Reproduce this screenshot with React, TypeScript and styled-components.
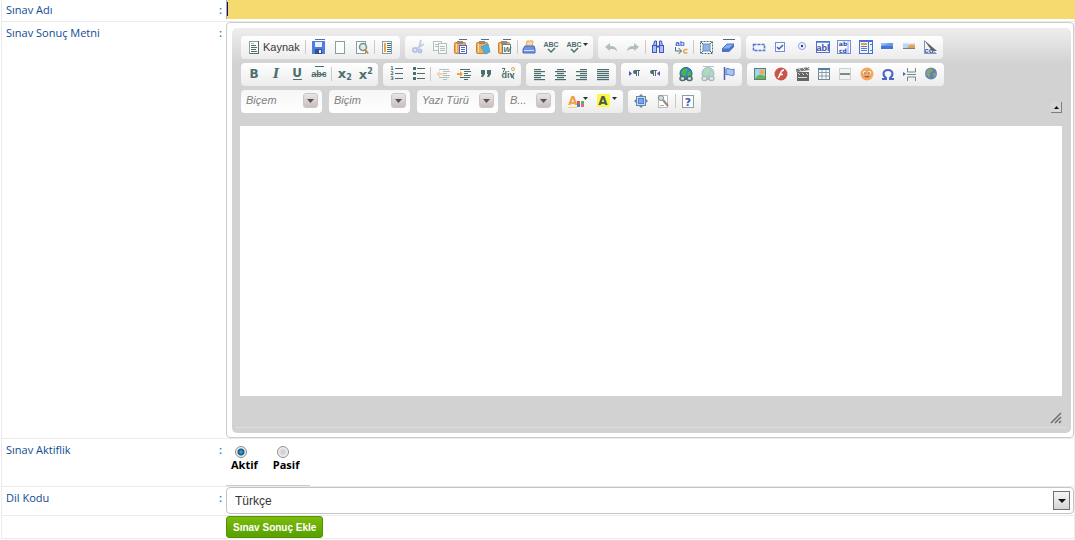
import React from "react";
import styled, { createGlobalStyle, css } from "styled-components";

const INK = "#4d6e6e";
const BLUE = "#4a66d0";
const UI_FONT = `"Liberation Sans", Arial, sans-serif`;
const LABEL_FONT = `"Open Sans", "Noto Sans", sans-serif`;

const GlobalStyle = createGlobalStyle`
  *, *::before, *::after { box-sizing: border-box; }
  body { margin: 0; background: #fff; font-family: ${UI_FONT}; }
`;

/* ---------- form rows ---------- */

const Form = styled.form`
  margin-left: 1px;
`;

const Row = styled.div`
  display: grid;
  grid-template-columns: 224px minmax(0, 1fr);
  border: 1px solid #ebebeb;
  border-top: 0;
`;

const caption = css`
  display: flex;
  justify-content: space-between;
  padding: 3px 4px 0;
  font: 11px/16px ${LABEL_FONT};
  color: #0d4b94;
`;
const Caption = styled.label<{ $tight?: boolean }>`
  ${caption}
  ${(p) => p.$tight && "padding-top: 2px;"}
`;
const GroupCaption = styled.span`${caption}`;
const Colon = styled.span`
  font-weight: 600;
  color: #1a75a8;
`;

const NameInput = styled.input`
  width: calc(100% + 1px);
  height: 19px;
  margin-bottom: 2px;
  padding: 0 4px;
  border: 0;
  border-left: 1px solid #a9a9a9;
  border-radius: 0;
  outline: 0;
  background: linear-gradient(#10108a, #10108a) 0 2px / 1px 14px no-repeat #f5da70;
  font: 12px ${UI_FONT};
`;

/* ---------- editor ---------- */

const Frame = styled.div`
  padding: 5px 2px 4px 5px;
  border: 1px solid #ccc;
  border-radius: 4px;
`;

const Panel = styled.div`
  padding: 8px 9px 5px 8px;
  border-radius: 5px;
  background: linear-gradient(#eeeeee, #d2d2d2 36px);
`;

const Toolbar = styled.div`
  display: flex;
  flex-direction: column;
  gap: 4px;
  padding-left: 1px;
  margin-bottom: 13px;
`;

const ToolRow = styled.div`
  display: flex;
  gap: 5px;
`;

const Group = styled.div<{ $width: number }>`
  display: flex;
  align-items: center;
  flex: 0 0 ${(p) => p.$width}px;
  height: 23px;
  padding: 0 2px 1px;
  border-radius: 4px;
  background: linear-gradient(#ffffff, #ececec);
`;

const ToolButton = styled.button<{ $wide?: boolean; $dim?: boolean }>`
  display: flex;
  align-items: center;
  justify-content: center;
  flex: ${(p) => (p.$wide ? "0 0 29px" : "1 1 0")};
  min-width: 0;
  height: 20px;
  padding: 0;
  border: 0;
  background: none;
  color: #3a3a3a;
  opacity: ${(p) => (p.$dim ? 0.4 : 1)};
`;

const SourceButton = styled(ToolButton)`
  flex: 0 0 61px;
  justify-content: flex-start;
  gap: 1px;
  padding-left: 3px;
  font: 11px ${UI_FONT};
`;

const Divider = styled.span`
  flex: 0 0 1px;
  height: 14px;
  margin: 0 1px;
  background: #c9c9c9;
`;

const Icon = styled.svg`
  display: block;
  flex: none;
  overflow: visible;
`;

const Combos = styled.div`
  display: flex;
  gap: 7px;
  margin-right: 2px;
`;

const ComboBox = styled.div<{ $width: number }>`
  position: relative;
  flex: 0 0 ${(p) => p.$width}px;
  height: 23px;
`;

const ComboSelect = styled.select`
  appearance: none;
  display: block;
  width: 100%;
  height: 100%;
  padding: 0 22px 3px 5px;
  border: 0;
  border-radius: 4px;
  background: linear-gradient(#f6f6f6, #ffffff);
  font: italic 11px ${UI_FONT};
  color: #808080;
`;

const ComboArrow = styled.span`
  position: absolute;
  top: 3px;
  right: 4px;
  display: flex;
  align-items: center;
  justify-content: center;
  width: 15px;
  height: 15px;
  border: 1px solid #cdc5c5;
  border-radius: 3px;
  background: linear-gradient(#eae6e6, #c8bebe);
  pointer-events: none;
`;

const CollapseButton = styled.button`
  display: flex;
  align-items: center;
  justify-content: center;
  align-self: flex-end;
  width: 11px;
  height: 11px;
  margin-left: auto;
  padding: 0;
  border: 0 solid #7c7c7c;
  border-width: 0 1px 1px 0;
  background: #d6d6d6;
`;

const EditArea = styled.textarea`
  display: block;
  width: 100%;
  height: 270px;
  padding: 8px;
  border: 0;
  outline: 0;
  resize: none;
  background: #fff;
  font: 12px ${UI_FONT};
`;

const PanelFooter = styled.div`
  display: flex;
  justify-content: flex-end;
  height: 32px;
  margin: 0 -4px;
  padding: 16px 4px 0;
  border-bottom: 1px solid #e0e0e0;
`;

/* ---------- status, language, submit ---------- */

const RadioGroup = styled.div`
  display: flex;
  gap: 15px;
  width: 84px;
  height: 47px;
  padding: 7px 5px 0;
  border-bottom: 1px solid #ccc;
`;

const RadioLabel = styled.label`
  display: flex;
  flex-direction: column;
  font: bold 11px/14px ${LABEL_FONT};
  color: #000;
`;

const Radio = styled.input`
  appearance: none;
  width: 12px;
  height: 12px;
  margin: 0 0 0 4px;
  border: 1px solid #8b8f94;
  border-radius: 50%;
  background: radial-gradient(circle, #d4d4d4 0 2px, #f6f6f6 5px);
  &:checked {
    background: radial-gradient(circle at 50% 50%, #4fb0dc 0, #14527c 3px, #e9eef2 4px);
  }
`;

const LanguageBox = styled.div`
  position: relative;
  height: 28px;
`;

const LanguageSelect = styled.select`
  appearance: none;
  display: block;
  width: 100%;
  height: 27px;
  padding: 0 30px 0 8px;
  border: 1px solid #c4c4c4;
  border-radius: 4px;
  background: #fff;
  font: 12px ${UI_FONT};
  color: #333;
`;

const LanguageArrow = styled.span`
  position: absolute;
  top: 4px;
  right: 4px;
  display: flex;
  align-items: center;
  justify-content: center;
  width: 17px;
  height: 19px;
  border: 1px solid #6f6f6f;
  background: linear-gradient(#f6f6f6, #d5d5d5);
  pointer-events: none;
`;

const SubmitButton = styled.button`
  justify-self: start;
  height: 22px;
  padding: 0 6px;
  border: 1px solid #4f9400;
  border-radius: 3px;
  background: linear-gradient(#7dbb0c, #57a000);
  font: bold 10px ${UI_FONT};
  color: #fff;
`;

/* ---------- icon drawings, each on a 16 by 16 grid ---------- */

const Lines = ({ rows, color = INK }: { rows: [number, number, number][]; color?: string }) => (
  <g fill={color} shapeRendering="crispEdges">
    {rows.map(([x, y, w], i) => (
      <rect key={i} x={x} y={y} width={w} height="1" />
    ))}
  </g>
);

const Glyph = ({ x = 8, y = 12, size = 12, color = INK, italic = false, font = "DejaVu Sans", children }: {
  x?: number; y?: number; size?: number; color?: string; italic?: boolean; font?: string; children: string;
}) => (
  <text x={x} y={y} fontSize={size} fontWeight="bold" fontStyle={italic ? "italic" : "normal"} fontFamily={`"${font}", sans-serif`} textAnchor="middle" fill={color}>
    {children}
  </text>
);

const Page = ({ x = 3.5 }: { x?: number }) => (
  <rect x={x} y="2.5" width="9" height="12" fill="#fbfdfd" stroke="#8a9f9f" />
);

const Clipboard = () => (
  <g>
    <rect x="1.5" y="3.5" width="11" height="11" rx="1" fill="#f3ab55" stroke="#c58338" />
    <path d="M3.500 5v8" stroke="#fbd9a4" />
    <rect x="4" y="2" width="6" height="3" fill="#9a8a7c" />
    <rect x="6" y="0" width="8" height="1" fill="#5a6a94" />
  </g>
);

const Caret = ({ x = 16, y = 6 }: { x?: number; y?: number }) => (
  <path d={`M${x} ${y}h5l-2.500 3z`} fill="#303030" />
);

const Globe = () => (
  <g>
    <circle cx="8" cy="7.500" r="6" fill="#2f86d4" stroke="#235a8c" />
    <path d="M4 4l4-2 2 2-2 3-1 4-4-3zM10 6l3-1v4l-2 2-2-3z" fill="#49b648" />
  </g>
);

const Chain = () => (
  <g fill="#d4dddd" stroke={INK} strokeWidth="1.500">
    <rect x="2" y="10.500" width="5" height="4" rx="2" />
    <rect x="9" y="10.500" width="5" height="4" rx="2" />
    <path d="M6 12.500h4" />
  </g>
);

const Align = ({ xs }: { xs: [number, number][] }) => (
  <g fill={INK}>
    {xs.map(([x, w], i) => <rect key={i} x={x} y={3 + i * 2} width={w} height="1.200" />)}
  </g>
);

const Pilcrow = ({ x }: { x: number }) => (
  <path d={`M${x + 3} 4v6h1v-5h1v5h1v-5h1v-1h-5a2 2 0 0 0 0 4h1z`} fill={INK} />
);

const Indent = ({ out }: { out?: boolean }) => (
  <g>
    <Lines rows={[[4, 3, 10], [8, 5, 7], [8, 7, 4], [8, 9, 7], [4, 11, 10], [8, 13, 4]]} />
    <path d={out ? "M1 8l4-3v2h3v2h-3v2z" : "M7 8l-3-3v2h-3v2h3v2z"} fill="#f4a13c" />
  </g>
);

const SpellCheck = ({ x = 8 }: { x?: number }) => (
  <g>
    <Glyph x={x} y={8} size={7} font="Liberation Sans">ABC</Glyph>
    <path d={`M${x - 3} 10l3 3 4-4`} fill="none" stroke={INK} strokeWidth="1.500" />
  </g>
);

const icons: Record<string, React.ReactNode> = {
  source: <g><Page /><path d="M12.500 2v12.500M4 14.500h9" stroke={INK} /><Lines rows={[[5, 4, 3], [5, 6, 5], [5, 8, 6], [5, 10, 5], [5, 12, 6]]} /><path d="M5 4.500h3" stroke="#e8b05a" /></g>,
  save: (
    <g shapeRendering="crispEdges">
      <rect x="2" y="2" width="13" height="13" fill="#4c7ce4" />
      <rect x="5" y="0" width="10" height="1" fill="#5a6aa4" />
      <rect x="5" y="3" width="7" height="5" fill="#e8f0ff" />
      <rect x="5" y="10" width="7" height="5" fill="#34508e" />
      <rect x="9" y="11" width="2" height="3" fill="#f4f4d0" />
    </g>
  ),
  newPage: <Page />,
  preview: (
    <g>
      <Page x={2.5} />
      <circle cx="9" cy="8" r="3.500" fill="#dfeaea" stroke="#7a908f" strokeWidth="1.500" />
      <path d="M11 10.500l3 4" stroke="#c98a3c" strokeWidth="2" />
    </g>
  ),
  templates: <g><Page /><Lines rows={[[8, 4, 4], [8, 6, 4], [8, 8, 4], [8, 10, 4], [8, 12, 4]]} /><path d="M6 4v9" stroke="#e8a24a" strokeWidth="2" /></g>,
  cut: (
    <g stroke="#5f7fd0" strokeWidth="2" fill="none">
      <path d="M11 1l-2 8M14 5l-8 5" stroke="#7b93b8" />
      <circle cx="5" cy="11" r="2" /><circle cx="10" cy="12" r="1.500" />
    </g>
  ),
  copy: (
    <g fill="#fff" stroke={INK}>
      <rect x="1.500" y="2.500" width="8" height="9" />
      <rect x="6.500" y="4.500" width="8" height="10" />
      <path d="M8 7.500h5M8 9.500h5M8 11.500h5M3 5.500h3M3 7.500h3" />
    </g>
  ),
  paste: <g><Clipboard /><rect x="6.500" y="6.500" width="7" height="8" fill="#fff" stroke={BLUE} /><Lines color={BLUE} rows={[[8, 8, 4], [8, 10, 4], [8, 12, 4]]} /></g>,
  pasteText: <g><Clipboard /><path d="M6 8l7-3 2 8-5 2z" fill="#4bb0dc" stroke="#5c9fc4" /></g>,
  pasteWord: <g><Clipboard /><rect x="5.500" y="5.500" width="8" height="9" fill="#fff" stroke="#6d8585" /><Glyph x={10} y={13} size={8} font="Liberation Sans" italic>W</Glyph></g>,
  print: (
    <g>
      <path d="M5 8l1-6h6l-1 6z" fill="#f8d6a0" stroke="#e0a860" />
      <path d="M2 10l2-3h9l1 3v4h-12z" fill="#6f93e4" stroke="#4c68ac" />
      <path d="M3 11.500h10" stroke="#cfe0ff" />
    </g>
  ),
  spell: <SpellCheck />,
  spellMenu: <g><SpellCheck x={5} /><Caret x={14} y={4} /></g>,
  undo: <path d="M2 8l5-4v3c4 0 7 1 7 6-1-3-4-3-7-3v2z" fill={INK} />,
  redo: <path d="M14 8l-5-4v3c-4 0-7 1-7 6 1-3 4-3 7-3v2z" fill={INK} />,
  find: (
    <g fill="#a9c0ff" stroke="#4058b4">
      <path d="M3.500 7l1-5h2v5M12.500 7l-1-5h-2v5" /><rect x="2.500" y="6.500" width="4" height="7" /><rect x="9.500" y="6.500" width="4" height="7" /><path d="M6 7.500h4" strokeWidth="2" />
    </g>
  ),
  replace: (
    <g>
      <Glyph x={7} y={7} size={8} color={BLUE} font="Liberation Sans">ab</Glyph>
      <path d="M14.500 10.500h-2a1.500 1.500 0 0 0 0 3.500h2" fill="none" stroke="#eba54c" strokeWidth="1.500" />
      <path d="M2.500 8v4h6m-3-3l3 3-3 3" fill="none" stroke={INK} />
    </g>
  ),
  selectAll: (
    <g>
      <rect x="2.500" y="2.500" width="12" height="12" fill="#fff" stroke={INK} strokeDasharray="2 1" />
      <rect x="5" y="5" width="7" height="7" fill="#8fb4e8" stroke="#6d8cb4" />
      <path d="M3 3l2 2M14 3l-2 2M3 14l2-2M14 14l-2-2" stroke={INK} />
    </g>
  ),
  erase: <g><path d="M3 .500h12" stroke={INK} /><path d="M2 10l5-5h7l-5 5z" fill="#80abf0" stroke="#4c72c4" /><path d="M2 10h7l5-5v3l-5 5h-7z" fill="#4c72c4" /></g>,
  form: <rect x="2.500" y="5.500" width="11" height="6" fill="none" stroke="#4c74d8" strokeWidth="1.500" strokeDasharray="3 1" />,
  checkbox: <g><rect x="3.500" y="3.500" width="9" height="9" fill="#f6f9ff" stroke="#6f8fe0" /><path d="M5 8l2 2 4-4" fill="none" stroke="#4c5c98" strokeWidth="1.500" /></g>,
  radio: <g><circle cx="8" cy="7" r="3.500" fill="#f4f8ff" stroke="#88a3de" /><circle cx="8" cy="7" r="1.200" fill="#203c94" /></g>,
  textField: <g><rect x="1.500" y="2.500" width="13" height="11" fill="#f6f9ff" stroke="#4c74d8" /><path d="M1 3h14" stroke="#4c74d8" strokeWidth="1.500" /><Glyph x={8} y={12} size={9} font="Liberation Sans" color="#3c509c">abl</Glyph></g>,
  textArea: <g><rect x="1.500" y="1.500" width="13" height="13" fill="#f6f9ff" stroke="#6e8fdc" /><path d="M12 2v12" stroke="#8eaae8" /><Glyph x={7} y={7} size={6} color="#3c509c">ab</Glyph><Glyph x={7} y={14} size={6} color="#3c509c">cd</Glyph></g>,
  selectField: <g><rect x="1.500" y="1.500" width="13" height="13" fill="#eef3ff" stroke="#4870d0" /><path d="M2 2.500h12M10.500 3v11" stroke="#4870d0" /><Lines color="#e49a4c" rows={[[3, 4, 6], [3, 5, 6]]} /><Lines color="#5b77b8" rows={[[3, 7, 6], [3, 9, 6], [3, 11, 6], [12, 5, 2], [12, 11, 2]]} /></g>,
  button: <g><path d="M2 4h12v6h-12z" fill="#6a98e8" /><path d="M2 7h12v3h-12z" fill="#4474d4" /><path d="M2 7l8-3h-8z" fill="#98bdf6" /></g>,
  imageButton: <g><path d="M2 4.500h12v5h-12z" fill="#b9d5f8" /><path d="M6 9.500c1-3 4-5 8-3v3z" fill="#e8a050" /><path d="M2 9.500h12" stroke="#8b7a6a" /></g>,
  hidden: <g><Glyph x={8} y={14} size={8} font="Liberation Sans" color="#4258b0">cd.</Glyph><path d="M2 1l13 11h-5z" fill="#55656a" /><path d="M2.500 1.500v13h12" fill="none" stroke="#8195c0" /></g>,
  bold: <Glyph size={12}>B</Glyph>,
  italic: <Glyph size={13} italic font="DejaVu Serif">I</Glyph>,
  underline: <g><Glyph y={11} size={12}>U</Glyph><path d="M4 13.500h9" stroke={INK} /></g>,
  strike: <g><path d="M4 .500h9" stroke={INK} /><Glyph y={11} size={9} font="Liberation Sans">abc</Glyph><path d="M1 8.500h14" stroke={INK} /></g>,
  sub: <g><Glyph x={6} y={12} size={13}>x</Glyph><Glyph x={13} y={14} size={8}>2</Glyph></g>,
  sup: <g><Glyph x={6} y={13} size={13}>x</Glyph><Glyph x={13} y={8} size={8}>2</Glyph></g>,
  ordered: <g><Lines rows={[[7, 2, 8], [7, 7, 8], [7, 12, 8]]} /><Glyph x={4} y={4} size={5}>1</Glyph><Glyph x={4} y={9} size={5}>2</Glyph><Glyph x={4} y={14} size={5}>3</Glyph></g>,
  bullets: <g><Lines rows={[[7, 2, 8], [7, 7, 8], [7, 12, 8]]} /><path d="M3 1h3v3h-3zM3 6h3v3h-3zM3 11h3v3h-3z" fill={INK} /></g>,
  outdent: <Indent out />,
  indent: <Indent />,
  quote: <path d="M3 4h4v4l-2 3h-2l1-3h-1zM9 4h4v4l-2 3h-2l1-3h-1z" fill={INK} />,
  div: <g><Glyph x={8} y={12} size={9} font="Liberation Sans">div</Glyph><path d="M2 2.500h3l-2 4M11 8l3 5" fill="none" stroke={INK} /><circle cx="13" cy="3" r="1.500" fill="#fff" stroke="#eda044" /></g>,
  left: <Align xs={[[3, 7], [3, 11], [3, 7], [3, 11], [3, 7], [3, 11]]} />,
  center: <Align xs={[[5, 7], [3, 11], [5, 7], [3, 11], [5, 7], [3, 11]]} />,
  right: <Align xs={[[6, 7], [2, 11], [6, 7], [2, 11], [6, 7], [2, 11]]} />,
  justify: <Align xs={[[2, 12], [2, 12], [2, 12], [2, 12], [2, 12], [2, 12]]} />,
  ltr: <g><path d="M3 5l3 2.500-3 2.500z" fill="#5050c4" /><Pilcrow x={7} /></g>,
  rtl: <g><path d="M13 5l-3 2.500 3 2.500z" fill="#5050c4" /><Pilcrow x={3} /></g>,
  link: <g><Globe /><Chain /></g>,
  unlink: <g><Globe /><Chain /><path d="M3 .500h11" stroke={INK} /></g>,
  anchor: <g><path d="M3.500 1v13" stroke="#4c62a8" strokeWidth="1.500" /><path d="M5 3c3-2 4 2 8 0v6c-4 2-5-2-8 0z" fill="#abc3f6" stroke="#5a76c4" /></g>,
  image: <g><rect x="2.500" y="2.500" width="11" height="11" fill="#9fd4f4" stroke="#5e8070" /><path d="M3 13c2-5 6-5 10-3v3z" fill="#68b558" /><circle cx="10" cy="6" r="2.500" fill="#f0a84a" /></g>,
  flash: <g><circle cx="8" cy="8" r="6.500" fill="#cc5348" /><path d="M11 4c-4 0-3 5-6 8M6 8.500h4" fill="none" stroke="#fff" strokeWidth="1.500" /></g>,
  movie: <g><rect x="2" y="6" width="12" height="9" fill="#666" /><path d="M1 3l13-2 .500 3-13 2z" fill="#777" /><path d="M4 3l2 2M8 2l2 2M12 1l2 2M3 7l2 2M7 7l2 2M11 7l2 2M3 11.500h9" stroke="#dadada" /></g>,
  table: <g><rect x="2.500" y="2.500" width="11" height="11" fill="#fff" stroke="#6f8692" /><path d="M2 3h12" stroke="#50809c" strokeWidth="2" /><path d="M2 6.500h12M2 10h12M6 4v10M10 4v10" stroke="#8a9ca6" /></g>,
  rule: <g><rect x="2.500" y="2.500" width="11" height="11" fill="#f3f3f3" stroke="#cfcfcf" /><path d="M3 8h10" stroke={INK} strokeWidth="1.500" /></g>,
  smiley: <g><circle cx="8" cy="8" r="6.500" fill="#f4a85c" /><circle cx="5.500" cy="6.500" r="1.500" fill="#fff" /><circle cx="10.500" cy="6.500" r="1.500" fill="#fff" /><circle cx="6" cy="7" r=".8" fill="#333" /><circle cx="10" cy="7" r=".8" fill="#333" /><path d="M5 10c2 2 4 2 6 0z" fill="#b4502c" /></g>,
  omega: <path d="M2 13h4v-1c-4-3-3-8 2-8s6 5 2 8v1h4" fill="none" stroke="#4c66c4" strokeWidth="2" />,
  pageBreak: <g fill="none" stroke="#708a89"><path d="M5.500 2v4h8v-4M5.500 15v-4h8v4M5 8.500h9" /><path d="M1 6l3 2-3 2z" fill={BLUE} stroke="none" /></g>,
  iframe: <g><circle cx="8" cy="7.500" r="6" fill="#6482b0" /><path d="M4 4l4-2 2 3-3 2v5l-4-4zM10 7l4 0-3 5z" fill="#88a470" /></g>,
  textColor: <g><Glyph x={3} y={12} size={12} color="#f0a048">A</Glyph><path d="M7 8h3v3h-3z" fill="#e25b4a" /><path d="M11 8h3v3h-3z" fill="#58b656" /><path d="M7 11h3v3h-3z" fill="#4c78dc" /><path d="M11 11h3v3h-3z" fill="#e06a7c" /><path d="M-2 14.500h9" stroke="#f2d860" /><Caret x={13} y={4} /></g>,
  fillColor: <g><rect x="-2" y="1" width="13" height="13" fill="#fdf848" /><Glyph x={4} y={12} size={12} color="#4c5c44">A</Glyph><Caret x={13} y={4} /></g>,
  maximize: <g><path d="M8 1l2 2h3v3l2 2-2 2v3h-3l-2 2-2-2h-3v-3l-2-2 2-2v-3h3z" fill="#6a8898" /><rect x="4" y="4" width="8" height="8" fill="#c4dcff" /><rect x="5.500" y="5.500" width="5" height="5" fill="#78a6ee" stroke="#5080d4" /></g>,
  blocks: <g><rect x="3.500" y="2.500" width="9" height="12" fill="#fff" stroke="#b4bcbc" /><circle cx="6" cy="5" r="2.500" fill="#d5dede" stroke="#7b908f" /><path d="M8 7l5 6" stroke="#9c8772" strokeWidth="2" /><path d="M5 12.500h4" stroke="#98a8a8" /></g>,
  about: <g><rect x="2.500" y="2.500" width="11" height="12" fill="#fff" stroke="#8ba0a0" /><Glyph x={8} y={13} size={11} color="#4a54b8">?</Glyph></g>,
};

type Tool = { icon: string; title: string; dim?: boolean; wide?: boolean } | "|";
const t = (icon: string, title: string, extra: { dim?: boolean; wide?: boolean } = {}): Tool => ({ icon, title, ...extra });

type ToolGroup = { width: number; source?: boolean; tools: Tool[] };

const firstRow: ToolGroup[] = [
  { width: 159, source: true, tools: ["|", t("save", "Kaydet"), t("newPage", "Yeni Sayfa"), t("preview", "Ön İzleme"), "|", t("templates", "Şablonlar")] },
  { width: 188, tools: [t("cut", "Kes", { dim: true }), t("copy", "Kopyala", { dim: true }), t("paste", "Yapıştır"), t("pasteText", "Düz Metin Yapıştır"), t("pasteWord", "Word'den Yapıştır"), "|", t("print", "Yazdır"), t("spell", "Yazım Denetimi"), t("spellMenu", "Yazım Seçenekleri", { wide: true })] },
  { width: 143, tools: [t("undo", "Geri Al", { dim: true }), t("redo", "Tekrarla", { dim: true }), "|", t("find", "Bul"), t("replace", "Değiştir"), "|", t("selectAll", "Tümünü Seç"), t("erase", "Biçimi Kaldır")] },
  { width: 197, tools: [t("form", "Form"), t("checkbox", "Onay Kutusu"), t("radio", "Seçenek Düğmesi"), t("textField", "Metin Girişi"), t("textArea", "Çok Satırlı Metin"), t("selectField", "Seçim Menüsü"), t("button", "Düğme"), t("imageButton", "Resimli Düğme"), t("hidden", "Gizli Veri")] },
];

const secondRow: ToolGroup[] = [
  { width: 137, tools: [t("bold", "Kalın"), t("italic", "İtalik"), t("underline", "Altı Çizgili"), t("strike", "Üstü Çizgili"), "|", t("sub", "Alt Simge"), t("sup", "Üst Simge")] },
  { width: 138, tools: [t("ordered", "Numaralı Liste"), t("bullets", "Simgeli Liste"), "|", t("outdent", "Girintiyi Azalt", { dim: true }), t("indent", "Girintiyi Artır"), t("quote", "Alıntı"), t("div", "Div Kutusu")] },
  { width: 90, tools: [t("left", "Sola Dayalı"), t("center", "Ortalanmış"), t("right", "Sağa Dayalı"), t("justify", "İki Kenara Yaslanmış")] },
  { width: 47, tools: [t("ltr", "Soldan Sağa"), t("rtl", "Sağdan Sola")] },
  { width: 69, tools: [t("link", "Bağlantı"), t("unlink", "Bağlantıyı Kaldır", { dim: true }), t("anchor", "Çapa")] },
  { width: 197, tools: [t("image", "Resim"), t("flash", "Flash"), t("movie", "Video"), t("table", "Tablo"), t("rule", "Yatay Çizgi"), t("smiley", "İfade"), t("omega", "Özel Karakter"), t("pageBreak", "Sayfa Sonu"), t("iframe", "IFrame")] },
];

const thirdRow: ToolGroup[] = [
  { width: 61, tools: [t("textColor", "Yazı Rengi"), t("fillColor", "Arka Renk")] },
  { width: 73, tools: [t("maximize", "Büyüt"), t("blocks", "Blokları Göster"), "|", t("about", "Hakkında")] },
];

const combos = [
  { label: "Biçem", width: 81 },
  { label: "Biçim", width: 81 },
  { label: "Yazı Türü", width: 81 },
  { label: "B...", width: 50 },
];

const Draw = ({ name }: { name: string }) => (
  <Icon width="16" height="16" viewBox="0 0 16 16" aria-hidden="true">{icons[name]}</Icon>
);

const ToolGroups = ({ groups }: { groups: ToolGroup[] }) => (
  <>
    {groups.map((group, i) => (
      <Group key={i} $width={group.width}>
        {group.source && (
          <SourceButton type="button"><Draw name="source" />Kaynak</SourceButton>
        )}
        {group.tools.map((tool, j) =>
          tool === "|" ? (
            <Divider key={j} />
          ) : (
            <ToolButton key={j} type="button" aria-label={tool.title} $dim={tool.dim} $wide={tool.wide}>
              <Draw name={tool.icon} />
            </ToolButton>
          )
        )}
      </Group>
    ))}
  </>
);

const Triangle = ({ width, height, up, color = "#111" }: { width: number; height: number; up?: boolean; color?: string }) => (
  <Icon width={width} height={height} viewBox="0 0 10 10" preserveAspectRatio="none" aria-hidden="true">
    <path d={up ? "M0 10h10L5 0z" : "M0 0h10L5 10z"} fill={color} />
  </Icon>
);

export default function App() {
  return (
    <>
      <GlobalStyle />
      <Form onSubmit={(e) => e.preventDefault()}>
        <Row>
          <Caption htmlFor="exam-name" $tight>Sınav Adı<Colon>:</Colon></Caption>
          <NameInput id="exam-name" type="text" />
        </Row>
        <Row>
          <Caption htmlFor="result-text">Sınav Sonuç Metni<Colon>:</Colon></Caption>
          <Frame>
            <Panel>
              <Toolbar role="toolbar">
                <ToolRow><ToolGroups groups={firstRow} /></ToolRow>
                <ToolRow><ToolGroups groups={secondRow} /></ToolRow>
                <ToolRow>
                  <Combos>
                    {combos.map((combo) => (
                      <ComboBox key={combo.label} $width={combo.width}>
                        <ComboSelect aria-label={combo.label}><option>{combo.label}</option></ComboSelect>
                        <ComboArrow><Triangle width={7} height={4} color="#5a5252" /></ComboArrow>
                      </ComboBox>
                    ))}
                  </Combos>
                  <ToolGroups groups={thirdRow} />
                  <CollapseButton type="button" aria-label="Araç çubuğunu daralt"><Triangle width={5} height={3} up /></CollapseButton>
                </ToolRow>
              </Toolbar>
              <EditArea id="result-text" />
              <PanelFooter>
                <Icon width="12" height="12" viewBox="0 0 12 12" aria-hidden="true">
                  <path d="M1 11L11 1M5 11l6-6M9 11l2-2" stroke="#6e6e6e" strokeWidth="1.500" />
                </Icon>
              </PanelFooter>
            </Panel>
          </Frame>
        </Row>
        <Row>
          <GroupCaption id="status-caption">Sınav Aktiflik<Colon>:</Colon></GroupCaption>
          <RadioGroup role="radiogroup" aria-labelledby="status-caption">
            <RadioLabel><Radio type="radio" name="status" defaultChecked />Aktif</RadioLabel>
            <RadioLabel><Radio type="radio" name="status" />Pasif</RadioLabel>
          </RadioGroup>
        </Row>
        <Row>
          <Caption htmlFor="language">Dil Kodu<Colon>:</Colon></Caption>
          <LanguageBox>
            <LanguageSelect id="language"><option>Türkçe</option></LanguageSelect>
            <LanguageArrow><Triangle width={8} height={4} /></LanguageArrow>
          </LanguageBox>
        </Row>
        <Row>
          <span />
          <SubmitButton type="submit">Sınav Sonuç Ekle</SubmitButton>
        </Row>
      </Form>
    </>
  );
}
